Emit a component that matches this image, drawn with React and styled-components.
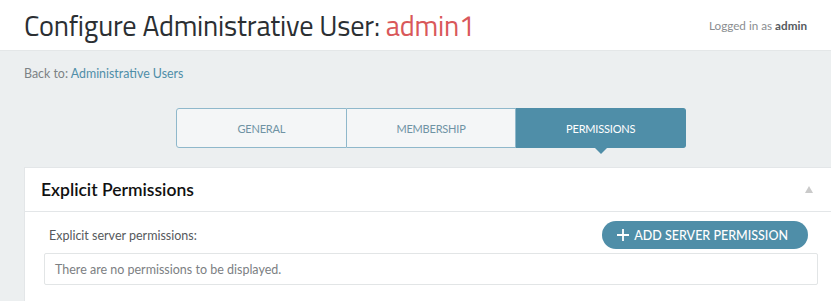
import React from "react";
import styled, { createGlobalStyle } from "styled-components";

const Global = createGlobalStyle`
  html, body { margin: 0; padding: 0; }
  body {
    background: #eceff0;
    font-family: "Source Sans Pro", Lato, "Noto Sans", sans-serif;
    overflow: hidden;
  }
`;

const Page = styled.div`
  width: 831px;
  min-height: 301px;
  background: #eceff0;
`;

const Header = styled.header`
  height: 50px;
  background: #fff;
  border-bottom: 1px solid #e4e7e8;
  display: flex;
  align-items: center;
  justify-content: space-between;
  padding: 0 24px;
`;

const Title = styled.h1`
  margin: 0;
  font-family: "Titillium Web", "Noto Sans", sans-serif;
  font-weight: 400;
  font-size: 28.3px;
  color: #2b2f33;
  letter-spacing: -0.2px;
  padding-top: 1px;
`;

const Accent = styled.span`
  color: #d9585a;
`;

const Logged = styled.div`
  font-size: 11.7px;
  color: #8a8d90;
  b { color: #555a5e; font-weight: 700; }
`;

const Content = styled.main`
  padding: 15px 0 0 24px;
`;

const Back = styled.div`
  font-size: 12.4px;
  color: #7c8285;
  a { color: #4f8ea8; text-decoration: none; }
`;

const Tabs = styled.nav`
  display: flex;
  width: 510px;
  margin: 27px 0 0 152px;
  height: 40px;
`;

const Tab = styled.div`
  position: relative;
  flex: 1;
  display: flex;
  align-items: center;
  justify-content: center;
  font-size: 11px;
  letter-spacing: -0.2px;
  text-transform: uppercase;
  box-sizing: border-box;
  color: ${p => (p.$active ? "#fff" : "#6f93a4")};
  background: ${p => (p.$active ? "#4f8ea8" : "#f4f6f7")};
  border: 1px solid #8fb8cb;
  border-left-width: ${p => (p.$first ? "1px" : "0")};
  border-color: ${p => (p.$active ? "#4f8ea8" : "#8fb8cb")};
  border-radius: ${p => (p.$first ? "3px 0 0 3px" : p.$last ? "0 3px 3px 0" : "0")};
  &::after {
    content: "";
    display: ${p => (p.$active ? "block" : "none")};
    position: absolute;
    left: 50%;
    bottom: -7px;
    margin-left: -7px;
    border-left: 7px solid transparent;
    border-right: 7px solid transparent;
    border-top: 7px solid #4f8ea8;
  }
`;

const Panel = styled.section`
  margin-top: 19px;
  background: #fff;
  border: 1px solid #e3e6e8;
  border-right: none;
`;

const PanelHead = styled.div`
  height: 43px;
  display: flex;
  align-items: center;
  justify-content: space-between;
  padding: 0 18px 0 16px;
  border-bottom: 1px solid #e3e6e8;
`;

const PanelTitle = styled.h2`
  margin: 0;
  font-size: 17.5px;
  font-weight: 600;
  color: #111;
`;

const Caret = styled.span`
  width: 0;
  height: 0;
  border-left: 4px solid transparent;
  border-right: 4px solid transparent;
  border-bottom: 7px solid #cacaca;
  margin-top: -1px;
`;

const PanelBody = styled.div`
  padding: 9px 13px 24px 19px;
`;

const Row = styled.div`
  display: flex;
  align-items: center;
  justify-content: space-between;
  padding-left: 5px;
  padding-right: 10px;
`;

const Label = styled.div`
  font-size: 12.5px;
  color: #56595c;
`;

const Button = styled.button`
  height: 28px;
  border: none;
  border-radius: 14px;
  background: #4f8ea8;
  color: #fff;
  font-family: inherit;
  font-size: 12.5px;
  font-weight: 500;
  text-transform: uppercase;
  padding: 0 20px 0 15px;
  display: flex;
  align-items: center;
  gap: 5px;
  svg { display: block; }
`;

const Empty = styled.div`
  margin-top: 4px;
  height: 32px;
  box-sizing: border-box;
  border: 1px solid #e2e5e6;
  border-radius: 2px;
  display: flex;
  align-items: center;
  padding-left: 10px;
  font-size: 12.5px;
  color: #7c8083;
`;

export default function App() {
  return (
    <Page>
      <Global />
      <Header>
        <Title>
          Configure Administrative User: <Accent>admin1</Accent>
        </Title>
        <Logged>
          Logged in as <b>admin</b>
        </Logged>
      </Header>
      <Content>
        <Back>
          Back to: <a href="#">Administrative Users</a>
        </Back>
        <Tabs>
          <Tab $first>General</Tab>
          <Tab>Membership</Tab>
          <Tab $active $last>Permissions</Tab>
        </Tabs>
        <Panel>
          <PanelHead>
            <PanelTitle>Explicit Permissions</PanelTitle>
            <Caret />
          </PanelHead>
          <PanelBody>
            <Row>
              <Label>Explicit server permissions:</Label>
              <Button>
                <svg width="12" height="12" viewBox="0 0 12 12">
                  <path d="M6 0v12M0 6h12" stroke="#fff" strokeWidth="1.8" />
                </svg>
                Add Server Permission
              </Button>
            </Row>
            <Empty>There are no permissions to be displayed.</Empty>
          </PanelBody>
        </Panel>
      </Content>
    </Page>
  );
}
